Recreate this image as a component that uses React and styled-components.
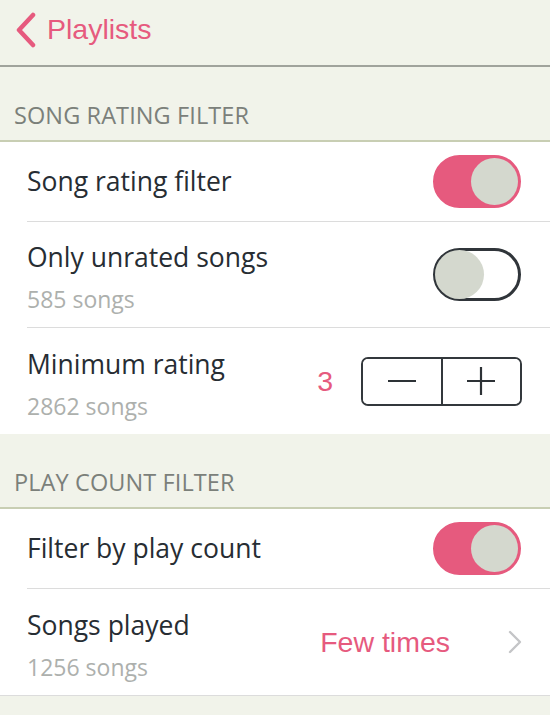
import React, { useState } from 'react';
import styled, { createGlobalStyle } from 'styled-components';

const colors = {
  cream: '#f1f3ea',
  pink: '#e65a7e',
  ink: '#272d33',
  muted: '#adb0ad',
  header: '#7b807a',
  rule: '#dcdcdc',
  sectionRule: '#c8ceb3',
  knob: '#d4d8ce',
};

const GlobalStyle = createGlobalStyle`
  html, body {
    margin: 0;
    padding: 0;
    background: ${colors.cream};
  }
  body {
    font-family: "Open Sans", "Noto Sans", sans-serif;
    -webkit-font-smoothing: antialiased;
  }
`;

const Screen = styled.div`
  width: 550px;
  min-height: 715px;
  background: ${colors.cream};
`;

const NavBar = styled.div`
  height: 65px;
  display: flex;
  align-items: center;
  border-bottom: 2px solid #a0a39c;
  box-sizing: content-box;
`;

const BackButton = styled.button`
  display: flex;
  align-items: center;
  gap: 10px;
  padding: 0 0 0 13px;
  margin: -6px 0 0;
  border: 0;
  background: none;
  color: ${colors.pink};
  font-family: "Liberation Sans", Arial, sans-serif;
  font-size: 28.5px;
  cursor: pointer;
`;

const SectionHeader = styled.div`
  height: 75px;
  display: flex;
  align-items: flex-end;
  padding: 0 0 9px 14px;
  box-sizing: border-box;
  color: ${colors.header};
  font-size: 23.5px;
  letter-spacing: 0.1px;
  border-bottom: 2px solid ${colors.sectionRule};
`;

const Group = styled.div`
  background: #fff;
  ${(p) => p.$last && `border-bottom: 1px solid ${colors.rule};`}
`;

const Row = styled.div`
  height: ${(p) => (p.$tall ? 106 : 80)}px;
  display: flex;
  align-items: center;
  margin-left: 27px;
  padding-right: 28px;
  box-sizing: border-box;
  border-bottom: ${(p) => (p.$divider ? `1px solid ${colors.rule}` : 'none')};
`;

const Labels = styled.div`
  flex: 1;
  display: flex;
  flex-direction: column;
  gap: 12px;
  margin-top: ${(p) => (p.$sub ? '5px' : '-1px')};
`;

const Title = styled.div`
  color: ${colors.ink};
  font-size: 26.5px;
  line-height: 32px;
`;

const Sub = styled.div`
  color: ${colors.muted};
  font-size: 23px;
  line-height: 28px;
`;

const Track = styled.button`
  position: relative;
  width: 88px;
  height: 53px;
  padding: 0;
  border-radius: 27px;
  box-sizing: border-box;
  cursor: pointer;
  background: ${(p) => (p.$on ? colors.pink : '#fff')};
  border: ${(p) => (p.$on ? `2px solid ${colors.pink}` : '3px solid #30353a')};
  margin-right: 1px;
`;

const Knob = styled.span`
  position: absolute;
  top: ${(p) => (p.$on ? 1 : -1)}px;
  width: ${(p) => (p.$on ? 47 : 49)}px;
  height: ${(p) => (p.$on ? 47 : 49)}px;
  border-radius: 50%;
  background: ${colors.knob};
  ${(p) => (p.$on ? 'right: 1px;' : 'left: -1px;')}
`;

const Value = styled.span`
  color: ${colors.pink};
  font-family: "Liberation Sans", Arial, sans-serif;
  font-size: 28.5px;
`;

const RatingValue = styled(Value)`
  margin-right: 28px;
  margin-top: 1px;
`;

const Stepper = styled.div`
  display: flex;
  width: 161px;
  height: 49px;
  border: 2px solid #33383c;
  border-radius: 7px;
  box-sizing: border-box;
  overflow: hidden;
`;

const StepButton = styled.button`
  flex: 1;
  display: flex;
  align-items: center;
  justify-content: center;
  border: 0;
  padding: 0;
  background: #fff;
  cursor: pointer;
  & + & {
    border-left: 2px solid #33383c;
  }
`;

const Disclosure = styled.div`
  display: flex;
  align-items: center;
  gap: 58px;
  margin-top: 0;
`;

function Toggle({ on, onClick }) {
  return (
    <Track $on={on} onClick={onClick}>
      <Knob $on={on} />
    </Track>
  );
}

function App() {
  const [ratingFilter, setRatingFilter] = useState(true);
  const [unratedOnly, setUnratedOnly] = useState(false);
  const [playFilter, setPlayFilter] = useState(true);
  const [rating, setRating] = useState(3);

  return (
    <Screen>
      <GlobalStyle />
      <NavBar>
        <BackButton>
          <svg width="24" height="36" viewBox="0 0 24 36">
            <path d="M20 3 L6 18 L20 33" fill="none" stroke={colors.pink} strokeWidth="4.5" strokeLinecap="round" strokeLinejoin="round" />
          </svg>
          Playlists
        </BackButton>
      </NavBar>

      <SectionHeader>SONG RATING FILTER</SectionHeader>
      <Group>
        <Row $divider>
          <Labels>
            <Title>Song rating filter</Title>
          </Labels>
          <Toggle on={ratingFilter} onClick={() => setRatingFilter(!ratingFilter)} />
        </Row>
        <Row $tall $divider>
          <Labels $sub>
            <Title>Only unrated songs</Title>
            <Sub>585 songs</Sub>
          </Labels>
          <Toggle on={unratedOnly} onClick={() => setUnratedOnly(!unratedOnly)} />
        </Row>
        <Row $tall>
          <Labels $sub>
            <Title>Minimum rating</Title>
            <Sub>2862 songs</Sub>
          </Labels>
          <RatingValue>{rating}</RatingValue>
          <Stepper>
            <StepButton onClick={() => setRating(Math.max(1, rating - 1))}>
              <svg width="28" height="28" viewBox="0 0 28 28">
                <path d="M0 14 H28" stroke="#2d3236" strokeWidth="2.2" />
              </svg>
            </StepButton>
            <StepButton onClick={() => setRating(Math.min(5, rating + 1))}>
              <svg width="28" height="28" viewBox="0 0 28 28">
                <path d="M0 14 H28 M14 0 V28" stroke="#2d3236" strokeWidth="2.2" />
              </svg>
            </StepButton>
          </Stepper>
        </Row>
      </Group>

      <SectionHeader>PLAY COUNT FILTER</SectionHeader>
      <Group $last>
        <Row $divider>
          <Labels>
            <Title>Filter by play count</Title>
          </Labels>
          <Toggle on={playFilter} onClick={() => setPlayFilter(!playFilter)} />
        </Row>
        <Row $tall>
          <Labels $sub>
            <Title>Songs played</Title>
            <Sub>1256 songs</Sub>
          </Labels>
          <Disclosure>
            <Value>Few times</Value>
            <svg width="14" height="24" viewBox="0 0 14 24">
              <path d="M2 2 L12 12 L2 22" fill="none" stroke="#c4c5c7" strokeWidth="2.4" strokeLinecap="round" strokeLinejoin="round" />
            </svg>
          </Disclosure>
        </Row>
      </Group>
    </Screen>
  );
}

export default App;
